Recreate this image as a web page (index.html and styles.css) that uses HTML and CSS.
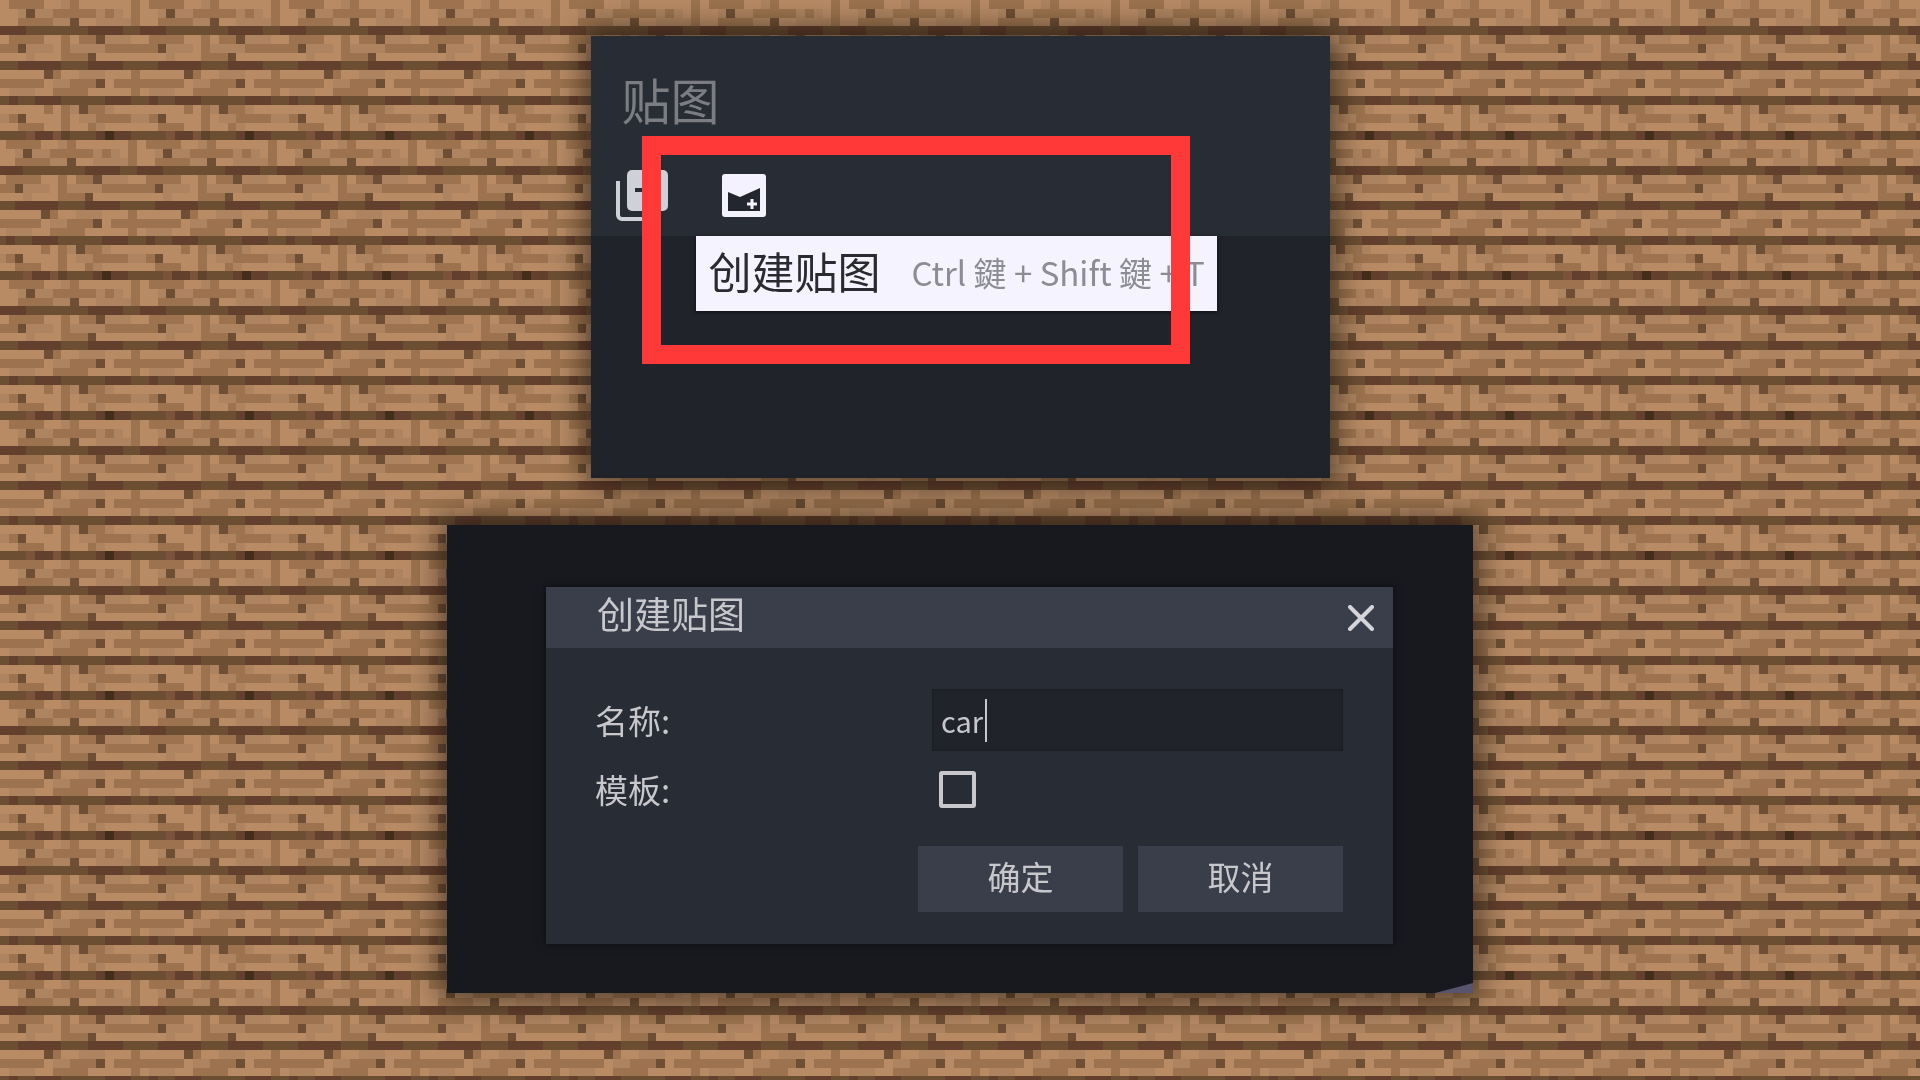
FILE: index.html
```html
<!DOCTYPE html>
<html>
	<head>
		<meta charset="utf-8" />
		<title>创建贴图</title>
		<link rel="stylesheet" href="styles.css">
	</head>
	<body>
		<!-- oak plank tile, 16x16 texels -->
		<svg class="wood" width="1920" height="1080" shape-rendering="crispEdges">
			<defs>
				<pattern id="plank" width="140" height="140" patternUnits="userSpaceOnUse" viewBox="0 0 16 16">
					<rect width="16" height="16" fill="#b88b65"/>
					<path fill="#ae8460" d="M7 0h1v1h-1zM2 1h1v1h-1zM4 1h2v1h-2zM11 1h1v1h-1zM13 1h1v1h-1zM6 2h2v1h-2zM11 2h4v1h-4zM12 4h3v1h-3zM3 5h3v1h-3zM8 5h4v1h-4zM3 6h1v1h-1zM9 8h3v1h-3zM6 9h2v1h-2zM1 10h3v1h-3zM8 12h1v1h-1zM12 12h1v1h-1zM0 13h1v1h-1zM9 13h2v1h-2zM15 13h1v1h-1zM11 14h1v1h-1z"/>
					<path fill="#9c734e" d="M1 0h4v1h-4zM8 0h1v1h-1zM15 0h1v1h-1zM6 1h5v1h-5zM12 1h1v1h-1zM15 1h1v1h-1zM2 2h4v1h-4zM15 2h1v1h-1zM1 4h4v1h-4zM7 4h1v1h-1zM9 4h2v1h-2zM0 5h2v1h-2zM7 5h1v1h-1zM12 5h4v1h-4zM7 6h3v1h-3zM6 8h1v1h-1zM15 8h1v1h-1zM0 9h5v1h-5zM8 9h3v1h-3zM13 9h3v1h-3zM6 10h4v1h-4zM15 10h1v1h-1zM5 12h1v1h-1zM7 12h1v1h-1zM10 12h2v1h-2zM1 13h1v1h-1zM7 13h1v1h-1zM11 13h4v1h-4zM2 14h3v1h-3zM7 14h1v1h-1zM10 14h1v1h-1z"/>
					<path fill="#6e4f35" d="M3 1h1v1h-1zM8 2h1v1h-1zM11 4h1v1h-1zM2 5h1v1h-1zM10 6h1v1h-1zM5 8h1v1h-1zM11 9h1v1h-1zM9 12h1v1h-1zM2 13h1v1h-1z"/>
					<path fill="#6c4e33" d="M3 3h7v1h-7zM14 3h2v1h-2zM0 7h2v1h-2zM7 7h3v1h-3zM14 7h2v1h-2zM0 11h1v1h-1zM2 11h2v1h-2zM7 11h5v1h-5zM15 11h1v1h-1zM0 15h3v1h-3zM8 15h3v1h-3zM15 15h1v1h-1z"/>
					<path fill="#633f2d" d="M0 3h3v1h-3zM10 3h4v1h-4zM2 7h5v1h-5zM10 7h4v1h-4zM1 11h1v1h-1zM4 11h3v1h-3zM12 11h3v1h-3zM4 15h2v1h-2zM11 15h1v1h-1zM13 15h2v1h-2z"/>
					<path fill="#7a533a" d="M3 15h1v1h-1zM6 15h1v1h-1z"/>
					<path fill="#5f432a" d="M7 15h1v1h-1z"/>
					<path fill="#432e1c" d="M12 15h1v1h-1z"/>
				</pattern>
			</defs>
			<rect width="1920" height="1080" fill="url(#plank)"/>
			<rect width="1930" height="140" y="140" fill="url(#plank)" transform="translate(-3 0)"/>
		</svg>

		<div class="shot shot-top">
			<div class="shot-head">
				<div class="shot-title">贴图</div>
				<div class="tools">
					<svg class="ico-copy" width="52" height="52" viewBox="0 0 52 52">
						<path d="M2 12v34a4 4 0 0 0 4 4h30" fill="none" stroke="#d0d0d8" stroke-width="4"/>
						<rect x="11" y="1" width="41" height="41" rx="5" fill="#d0d0d8"/>
						<rect x="19" y="19" width="9" height="4" fill="#282c34"/>
					</svg>
					<svg class="ico-add" width="44" height="43" viewBox="0 0 44 43">
						<rect width="44" height="43" rx="3" fill="#f4f2ff"/>
						<path d="M6 18L18 23L38 14V37H6z" fill="#23262e"/>
						<path d="M30 25v10M25 30h10" stroke="#f4f2ff" stroke-width="3"/>
					</svg>
				</div>
			</div>
			<div class="tip">
				<span class="tip-name">创建贴图</span>
				<span class="tip-keys">Ctrl 鍵 + Shift 鍵 + T</span>
			</div>
			<div class="redbox"></div>
		</div>

		<div class="shot shot-bottom">
			<div class="dialog">
				<div class="dialog-head">
					<span class="dialog-title">创建贴图</span>
					<svg class="ico-close" width="26" height="26" viewBox="0 0 26 26">
						<path d="M2 2L24 24M24 2L2 24" stroke="#d4d4da" stroke-width="4" stroke-linecap="round"/>
					</svg>
				</div>
				<div class="dialog-body">
					<div class="form">
						<label class="lbl">名称:</label>
						<div class="field"><span class="field-text">car</span><span class="caret"></span></div>
						<label class="lbl">模板:</label>
						<div class="check"></div>
					</div>
					<div class="btns">
						<div class="btn">确定</div>
						<div class="btn">取消</div>
					</div>
				</div>
			</div>
			<div class="corner"></div>
		</div>
	</body>
</html>
```

FILE: styles.css
```css
* {
	padding: 0px;
	margin: 0px;
	box-sizing: border-box;
}

body {
	width: 1920px;
	height: 1080px;
	overflow: hidden;
	display: flex;
	flex-direction: column;
	align-items: center;
	padding-top: 36px;
	gap: 47px;
	background-color: #b88b65;
	font-family: "Noto Sans CJK SC", "Noto Sans", sans-serif;
}

.wood {
	position: fixed;
	left: 0;
	top: 0;
}

.shot {
	position: relative;
	box-shadow: 0 0 30px 6px rgba(0, 0, 0, .55);
}

/* top picture */
.shot-top {
	width: 739px;
	height: 442px;
	background-color: #20232a;
}

.shot-head {
	height: 200px;
	padding: 33px 0 0 31px;
	background-color: #282c34;
}

.shot-title {
	font-size: 49px;
	line-height: 60px;
	color: #7b7d82;
	filter: blur(.6px);
}

.tools {
	display: flex;
	align-items: center;
	gap: 54px;
	margin: 40px 0 0 -6px;
}

.tools svg {
	display: block;
	filter: blur(.6px);
}

.tip {
	position: absolute;
	left: 105px;
	top: 200px;
	width: 521px;
	height: 75px;
	display: flex;
	align-items: center;
	gap: 31px;
	padding: 0 0 8px 13px;
	white-space: nowrap;
	background-color: #f5f3ff;
	box-shadow: 0 1px 4px rgba(0, 0, 0, .6);
}

.tip-name {
	font-size: 43px;
	color: #2a2b30;
	filter: blur(.6px);
}

.tip-keys {
	font-size: 33px;
	margin-top: 5px;
	color: #8b8c94;
	filter: blur(.6px);
}

.redbox {
	position: absolute;
	left: 51px;
	top: 100px;
	width: 548px;
	height: 228px;
	border: 19px solid #ff3838;
}

/* bottom picture */
.shot-bottom {
	width: 1026px;
	height: 468px;
	padding: 62px 80px 49px 99px;
	background-color: #17191e;
}

.dialog {
	height: 357px;
	background-color: #282c35;
	box-shadow: 0 0 8px rgba(0, 0, 0, .5);
}

.dialog-head {
	height: 61px;
	display: flex;
	align-items: center;
	justify-content: space-between;
	padding: 0 19px 0 51px;
	background-color: #3a3e4a;
}

.dialog-title {
	font-size: 37px;
	margin-top: -9px;
	color: #c8c8cc;
	filter: blur(.6px);
}

.dialog-body {
	padding: 41px 50px 0;
}

.form {
	display: grid;
	grid-template-columns: 336px 1fr;
	grid-template-rows: 62px 37px;
	row-gap: 20px;
	align-items: center;
}

.lbl {
	font-size: 33px;
	line-height: 37px;
	margin-left: -1px;
	color: #c8c8cc;
	filter: blur(.6px);
}

.field {
	height: 62px;
	display: flex;
	align-items: center;
	padding-left: 9px;
	background-color: #20232a;
	box-shadow: inset 0 0 2px #111317;
}

.field-text {
	font-size: 29px;
	color: #c8c8cc;
	filter: blur(.6px);
}

.caret {
	width: 2px;
	height: 43px;
	margin-left: 2px;
	background-color: #c8c8cc;
}

.check {
	width: 37px;
	height: 37px;
	margin-left: 7px;
	border: 4px solid #c8c8cc;
	border-radius: 3px;
}

.btns {
	display: flex;
	justify-content: flex-end;
	gap: 15px;
	margin-top: 38px;
}

.btn {
	width: 205px;
	height: 66px;
	display: flex;
	align-items: center;
	justify-content: center;
	padding-bottom: 6px;
	font-size: 33px;
	color: #c8c8cc;
	background-color: #3a3e4a;
}

.corner {
	position: absolute;
	right: 0;
	bottom: 0;
	width: 38px;
	height: 10px;
	background-color: #58546e;
	clip-path: polygon(100% 0, 100% 100%, 0 100%);
}
```
